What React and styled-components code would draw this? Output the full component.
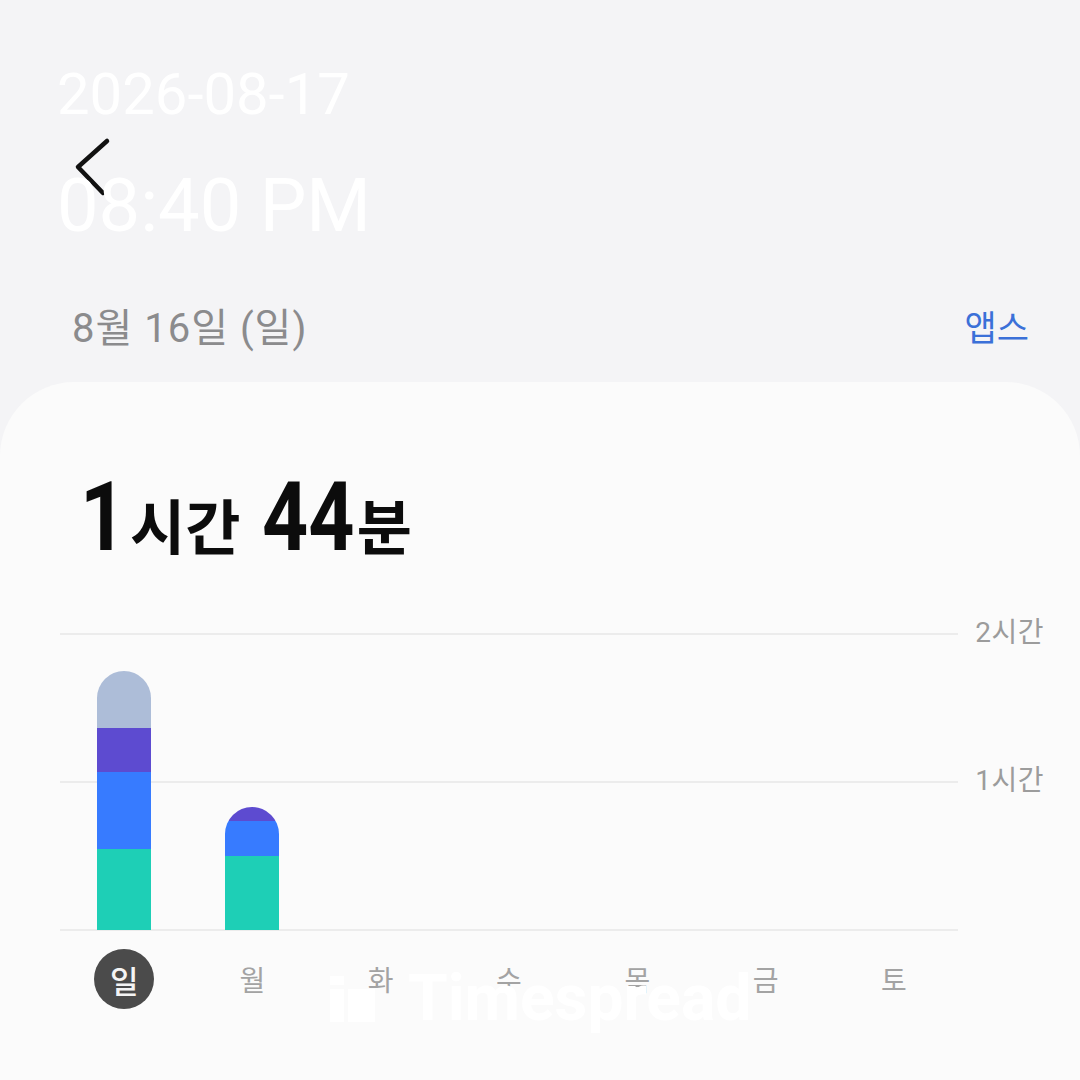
import React from "react";
import styled, { createGlobalStyle } from "styled-components";

const KR = `"Roboto", "Noto Sans CJK KR", sans-serif`;

const HOUR_PX = 148;

const week = [
  { day: "일", active: true, parts: [33, 31, 18, 23] },
  { day: "월", parts: [30, 14, 6] },
  { day: "화", parts: [] },
  { day: "수", parts: [] },
  { day: "목", parts: [] },
  { day: "금", parts: [] },
  { day: "토", parts: [] },
];

const segColors = ["#1ecfb6", "#377bff", "#5d4bd0", "#adbdd8"];

const GlobalStyle = createGlobalStyle`
  html, body {
    margin: 0;
    padding: 0;
    background: #f4f4f6;
  }
  body {
    font-family: ${KR};
  }
`;

export default function App() {
  return (
    <>
      <GlobalStyle />
      <Page>
        <TopBar>
          <BackButton aria-label="뒤로">
            <svg width="44" height="64" viewBox="0 0 44 64">
              <path
                d="M35 5 L6 31 L31 57"
                fill="none"
                stroke="#111"
                strokeWidth="4.5"
                strokeLinecap="round"
                strokeLinejoin="round"
              />
            </svg>
          </BackButton>
        </TopBar>

        <DateRow>
          <DateText>8월 16일 (일)</DateText>
          <AppsLink>앱스</AppsLink>
        </DateRow>

        <Card>
          <Total>
            <Num>1</Num>
            <Unit>시간</Unit>
            <Gap />
            <Num $wide>44</Num>
            <Unit>분</Unit>
          </Total>

          <ChartRow>
            <Plot>
              {week.map((d) => (
                <Column key={d.day}>
                  {d.parts.length > 0 && (
                    <Bar>
                      {d.parts.map((m, i) => (
                        <Segment
                          key={i}
                          $color={segColors[i]}
                          style={{ height: (m * HOUR_PX) / 60 }}
                        />
                      ))}
                    </Bar>
                  )}
                </Column>
              ))}
            </Plot>
            <Axis>
              <AxisLabel>2시간</AxisLabel>
              <AxisLabel>1시간</AxisLabel>
            </Axis>
          </ChartRow>

          <DayRow>
            {week.map((d) => (
              <Day key={d.day} $active={d.active}>
                {d.day}
              </Day>
            ))}
          </DayRow>
        </Card>

        <Stamp>
          <StampDate>2026-08-17</StampDate>
          <StampTime>08:40 PM</StampTime>
        </Stamp>

        <Watermark>
          <svg width="46" height="46" viewBox="0 0 46 46">
            <rect x="0" y="0" width="14" height="9" fill="#fff" />
            <rect x="0" y="13" width="14" height="33" fill="#fff" />
            <rect x="18" y="13" width="27" height="33" fill="#fff" />
          </svg>
          <WatermarkText>Timespread</WatermarkText>
        </Watermark>
      </Page>
    </>
  );
}

const Page = styled.div`
  position: relative;
  width: 1080px;
  min-height: 1080px;
  background: #f4f4f6;
  display: flex;
  flex-direction: column;
  overflow: hidden;
`;

const TopBar = styled.div`
  display: flex;
  align-items: center;
  height: 64px;
  padding: 136px 0 0 72px;
`;

const BackButton = styled.button`
  display: flex;
  border: 0;
  padding: 0;
  background: none;
`;

const DateRow = styled.div`
  display: flex;
  align-items: center;
  justify-content: space-between;
  height: 56px;
  margin-top: 97px;
  padding: 0 51px 0 72px;
`;

const DateText = styled.span`
  font-family: ${KR};
  font-size: 40px;
  letter-spacing: 1px;
  color: #8b8b8d;
`;

const AppsLink = styled.span`
  font-family: ${KR};
  font-size: 35px;
  color: #3b70d8;
`;

const Card = styled.div`
  flex: 1;
  margin-top: 29px;
  background: #fbfbfb;
  border-radius: 74px 74px 0 0;
  padding-top: 85px;
`;

const Total = styled.div`
  display: flex;
  align-items: baseline;
  height: 100px;
  line-height: 100px;
  padding-left: 80px;
  color: #0c0c0c;
`;

const Num = styled.span`
  display: inline-block;
  font-family: "Roboto", sans-serif;
  font-weight: 700;
  font-size: 96px;
  transform: scaleX(0.84);
  transform-origin: left;
  margin-right: ${(p) => (p.$wide ? -20 : -9)}px;
`;

const Unit = styled.span`
  font-family: "Noto Sans CJK KR", sans-serif;
  font-weight: 700;
  font-size: 60px;
  margin-left: 4px;
`;

const Gap = styled.span`
  width: 22px;
`;

const ChartRow = styled.div`
  display: flex;
  margin-top: 66px;
  padding-left: 60px;
`;

const Plot = styled.div`
  display: grid;
  grid-template-columns: repeat(7, 1fr);
  align-items: end;
  justify-items: center;
  width: 898px;
  height: 298px;
  background-image: linear-gradient(#ececec, #ececec),
    linear-gradient(#ececec, #ececec), linear-gradient(#ececec, #ececec);
  background-size: 100% 2px;
  background-repeat: no-repeat;
  background-position: 0 0, 0 148px, 0 296px;
`;

const Column = styled.div`
  display: flex;
  align-items: flex-end;
  height: 100%;
  padding-bottom: 1px;
`;

const Bar = styled.div`
  display: flex;
  flex-direction: column-reverse;
  width: 54px;
  border-radius: 27px 27px 0 0;
  overflow: hidden;
`;

const Segment = styled.div`
  background: ${(p) => p.$color};
`;

const Axis = styled.div`
  display: flex;
  flex-direction: column;
  align-items: flex-end;
  gap: 118px;
  width: 86px;
  margin-top: -15px;
`;

const AxisLabel = styled.span`
  height: 30px;
  line-height: 30px;
  font-family: ${KR};
  font-size: 28px;
  letter-spacing: 0.5px;
  color: #9c9c9c;
`;

const DayRow = styled.div`
  display: grid;
  grid-template-columns: repeat(7, 1fr);
  justify-items: center;
  width: 898px;
  margin: 18px 0 0 60px;
`;

const Day = styled.span`
  display: flex;
  align-items: center;
  justify-content: center;
  width: 60px;
  height: 60px;
  border-radius: 50%;
  font-family: "Noto Sans CJK KR", sans-serif;
  font-size: ${(p) => (p.$active ? 31 : 28)}px;
  font-weight: ${(p) => (p.$active ? 500 : 400)};
  color: ${(p) => (p.$active ? "#f4f4f4" : "#a3a3a3")};
  background: ${(p) => (p.$active ? "#4b4b4b" : "transparent")};
`;

const Stamp = styled.div`
  position: absolute;
  top: 65px;
  left: 57px;
  display: flex;
  flex-direction: column;
  gap: 46px;
  color: #ffffff;
  font-family: "Roboto", sans-serif;
  pointer-events: none;
`;

const StampDate = styled.div`
  font-size: 58px;
  line-height: 58px;
`;

const StampTime = styled.div`
  font-size: 74px;
  line-height: 74px;
`;

const Watermark = styled.div`
  position: absolute;
  left: 330px;
  top: 976px;
  display: flex;
  align-items: flex-end;
  gap: 32px;
  pointer-events: none;
`;

const WatermarkText = styled.span`
  font-family: "Roboto", sans-serif;
  font-weight: 700;
  font-size: 64px;
  line-height: 46px;
  color: #ffffff;
`;
